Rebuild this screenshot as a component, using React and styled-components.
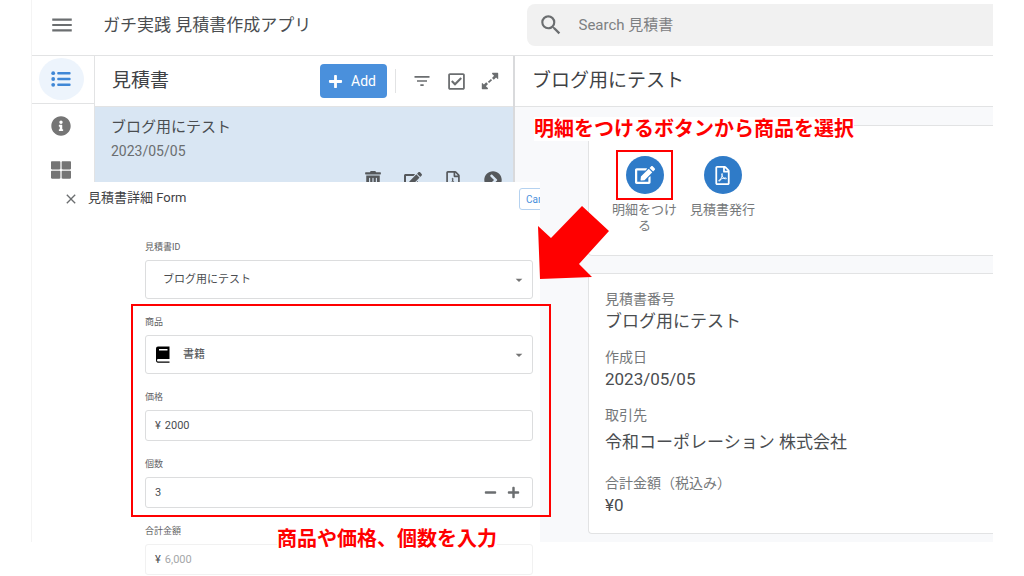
import { useState } from 'react';
import styled, { createGlobalStyle, css } from 'styled-components';
import {
  FaPlus,
  FaMinus,
  FaInfoCircle,
  FaThLarge,
  FaRegCheckSquare,
  FaTrashAlt,
  FaEdit,
  FaRegFilePdf,
  FaChevronCircleRight,
} from 'react-icons/fa';
import { MdMenu, MdSearch, MdFilterList, MdClose, MdArrowDropDown } from 'react-icons/md';

const GlobalStyle = createGlobalStyle`
  *, *::after {
    box-sizing: border-box;
  }
  body {
    margin: 0;
    background-color: #fff;
    color: #4a4d50;
    font-family: Roboto, "Noto Sans CJK JP", sans-serif;
  }
  button, input, select {
    font-family: inherit;
    color: inherit;
  }
  h1, h2, h3, p, dl, dd {
    margin: 0;
    font-weight: 400;
  }
`;

const Stage = styled.div`
  position: relative;
  min-height: 100vh;
  margin: 0 31px;
`;

const AppWindow = styled.div`
  border-left: 1px solid #f4f4f4;
`;

const TopBar = styled.header`
  display: flex;
  align-items: center;
  height: 56px;
  padding-bottom: 6px;
  border-bottom: 1px solid #e2e3e4;
`;

const IconButton = styled.button`
  display: inline-flex;
  align-items: center;
  justify-content: center;
  flex: none;
  padding: 0;
  border: none;
  background: none;
  color: ${({ $color }) => $color || '#6b6e70'};
  cursor: pointer;
`;

const MenuCell = styled.div`
  display: flex;
  justify-content: center;
  width: 60px;
`;

const AppTitle = styled.h1`
  flex: 1;
  padding-left: 11px;
  font-size: 17px;
  line-height: 22px;
`;

const SearchBox = styled.label`
  display: flex;
  align-items: center;
  gap: 15px;
  width: calc(50% - 14px);
  height: 42px;
  padding-left: 11px;
  border-radius: 8px 0 0 8px;
  background-color: #f1f1f1;
  color: #6b6e70;

  input {
    flex: 1;
    min-width: 0;
    padding: 0;
    border: none;
    outline: none;
    background: none;
    font-size: 15px;
  }
  input::placeholder {
    color: #7d8082;
    opacity: 1;
  }
`;

const Body = styled.div`
  display: grid;
  grid-template-columns: 63px minmax(0, 420fr) minmax(0, 478fr);
`;

const Sidebar = styled.nav`
  border-right: 1px solid #e2e3e4;
`;

const SidebarTop = styled.div`
  display: flex;
  align-items: center;
  justify-content: center;
  height: 48px;
  padding: 0 4px 2px 0;
  border-bottom: 1px solid #e2e3e4;
`;

const SidebarLinks = styled.div`
  display: flex;
  flex-direction: column;
  align-items: center;
  gap: 24px;
  padding: 12px 4px 0 0;
`;

const ActiveView = styled(IconButton)`
  width: 45px;
  height: 42px;
  border-radius: 50%;
  background-color: #edf4fc;
`;

const ListPane = styled.section`
  display: flex;
  flex-direction: column;
  border-right: 2px solid #d9dadc;
`;

const PaneHeader = styled.div`
  display: flex;
  align-items: center;
  height: 51px;
  padding: 0 14px 0 17px;
  border-bottom: 1px solid #e2e3e4;
`;

const PaneTitle = styled.h2`
  flex: 1;
  color: #3f4245;
  font-size: 19px;
  line-height: 24px;
`;

const AddButton = styled.button`
  display: flex;
  align-items: center;
  gap: 8px;
  height: 34px;
  padding: 0 11px 0 8px;
  border: none;
  border-radius: 4px;
  background-color: #4a90dc;
  color: #fff;
  font-size: 14px;
  cursor: pointer;
`;

const Divider = styled.span`
  width: 1px;
  height: 24px;
  margin: 0 16px 0 8px;
  background-color: #e2e3e4;
`;

const Tools = styled.div`
  display: flex;
  align-items: center;
  gap: 15px;
`;

const ListItem = styled.article`
  flex: 1;
  padding: 8px 11px 0 16px;
  background-color: #d9e6f3;
`;

const ItemTitle = styled.h3`
  font-size: 15px;
  line-height: 24px;
`;

const ItemDate = styled.p`
  color: #6b6e70;
  font-size: 14px;
  line-height: 24px;
`;

const ItemActions = styled.div`
  display: flex;
  justify-content: flex-end;
  gap: 22px;
  padding-top: 8px;
`;

const DetailPane = styled.section`
  position: relative;
  background-color: #f8f9fb;
`;

const DetailHeader = styled(PaneHeader)`
  background-color: #fff;
`;

const DetailBody = styled.div`
  display: flex;
  flex-direction: column;
  gap: 17px;
  padding: 18px 0 8px 73px;
`;

const Card = styled.div`
  border: 1px solid #e2e3e4;
  border-right: none;
  border-radius: 4px 0 0 4px;
  background-color: #fff;
`;

const ActionCard = styled(Card)`
  display: flex;
  gap: 13px;
  padding: 30px 23px 21px;
`;

const Action = styled.button`
  position: relative;
  display: flex;
  flex-direction: column;
  align-items: center;
  gap: 8px;
  width: 65px;
  padding: 0;
  border: none;
  background: none;
  color: #75787a;
  font-size: 13px;
  line-height: 16px;
  cursor: pointer;

  ${({ $marked }) =>
    $marked &&
    css`
      &::after {
        content: '';
        position: absolute;
        top: -6px;
        left: 4px;
        width: 57px;
        height: 50px;
        border: 2px solid #f00;
      }
    `}
`;

const Circle = styled.span`
  display: flex;
  align-items: center;
  justify-content: center;
  width: 38px;
  height: 38px;
  border-radius: 50%;
  background-color: #2f7bc8;
  color: #fff;
`;

const InfoCard = styled(Card)`
  padding: 15px 16px 16px;
`;

const InfoList = styled.dl`
  display: flex;
  flex-direction: column;
  gap: 14px;

  dt {
    color: #75787a;
    font-size: 14px;
    line-height: 20px;
  }
`;

const InfoValue = styled.dd`
  font-size: 17px;
  line-height: ${({ $tall }) => ($tall ? '34px' : '24px')};
`;

const FormPanel = styled.form`
  position: absolute;
  top: 182px;
  left: 1px;
  width: calc(50% + 27px);
  background-color: #fff;
`;

const FormHeader = styled.div`
  display: flex;
  align-items: center;
  height: 34px;
  padding-left: 31px;
  overflow: hidden;
`;

const FormTitle = styled.h2`
  flex: 1;
  padding: 0 0 2px 9px;
  color: #3f4245;
  font-size: 13px;
  line-height: 16px;
  white-space: nowrap;
`;

// The header is narrower than the button, so only its left end shows
const CancelClip = styled.div`
  width: 21px;
`;

const CancelButton = styled.button`
  width: 54px;
  height: 22px;
  padding: 0 6px;
  border: 1px solid #b5d2f0;
  border-radius: 3px;
  background-color: #fff;
  color: #4a90dc;
  font-size: 10px;
  text-align: left;
`;

const Fields = styled.div`
  display: flex;
  flex-direction: column;
  gap: 17px;
  padding: 25px 7px 0 113px;
`;

const MarkedFields = styled.div`
  position: relative;
  display: flex;
  flex-direction: column;
  gap: 17px;

  &::after {
    content: '';
    position: absolute;
    inset: -12px -18px -9px -14px;
    border: 2px solid #f00;
    pointer-events: none;
  }
`;

const Field = styled.div`
  display: flex;
  flex-direction: column;
  gap: 7px;
`;

const FieldLabel = styled.label`
  color: #5f6264;
  font-size: 9px;
  line-height: 12px;
`;

const Control = styled.div`
  display: flex;
  align-items: center;
  gap: 4px;
  height: ${({ $tall }) => ($tall ? '39px' : '31px')};
  padding: 0 5px 0 9px;
  border: 1px solid ${({ $muted }) => ($muted ? '#f1f1f1' : '#dcddde')};
  border-radius: 3px;
  font-size: 11px;

  input,
  select {
    flex: 1;
    min-width: 0;
    padding: 0;
    border: none;
    outline: none;
    background: none;
    font-size: 11px;
    appearance: none;
  }
  select {
    height: 100%;
    padding-left: 8px;
  }
  input:disabled {
    color: #a5a7a9;
  }
  > svg {
    flex: none;
    color: #757575;
  }
`;

const Stepper = styled.div`
  display: flex;
  gap: 10px;
  padding-right: 7px;
`;

const Note = styled.p`
  position: absolute;
  top: ${({ $top }) => $top};
  left: ${({ $left }) => $left};
  background-color: #fff;
  color: #f00;
  font-size: 20px;
  font-weight: 700;
  line-height: 24px;
  white-space: nowrap;
`;

const Arrow = styled.svg`
  position: absolute;
  top: 206px;
  left: calc(50% + 25px);
`;

const ListIcon = () => (
  <svg width="20" height="16" viewBox="0 0 20 16" fill="currentColor">
    <circle cx="2.2" cy="2.2" r="1.9" />
    <circle cx="2.2" cy="8" r="1.9" />
    <circle cx="2.2" cy="13.8" r="1.9" />
    <rect x="6.2" y="0.9" width="13.4" height="2.6" rx="1" />
    <rect x="6.2" y="6.7" width="13.4" height="2.6" rx="1" />
    <rect x="6.2" y="12.5" width="13.4" height="2.6" rx="1" />
  </svg>
);

const ExpandIcon = () => (
  <svg width="18" height="18" viewBox="0 0 18 18" fill="currentColor">
    <path d="M11 1.4q0-.6.6-.6h5q.6 0 .6.6v5q0 .8-.8.4l-1.3-1.2-2.3 2.2-1.8-1.8 2.1-2.2-1.7-1.6z" />
    <path d="M7 16.6q0 .6-.6.6h-5q-.6 0-.6-.6v-5q0-.8.8-.4l1.3 1.2 2.3-2.2 1.8 1.8-2.1 2.2 1.7 1.6z" />
    <path d="M8.1 11 6.9 9.8 9.9 7l1.2 1.2z" />
  </svg>
);

const BookIcon = () => (
  <svg width="16" height="18" viewBox="0 0 16 18">
    <path d="M3 .5h11.5V13H3q-1 0-1 1.2T3 15.600h11.500v1.200H3Q1 16.800 1 14V2.500Q1 .5 3 .5z" fill="#000" />
    <rect x="4" y="3" width="8.500" height="1.500" fill="#fff" />
  </svg>
);

const info = [
  { label: '見積書番号', value: 'ブログ用にテスト' },
  { label: '作成日', value: '2023/05/05' },
  { label: '取引先', value: '令和コーポレーション 株式会社', tall: true },
  { label: '合計金額（税込み）', value: '¥0' },
];

const App = () => {
  const [price, setPrice] = useState('2000');
  const [count, setCount] = useState(3);

  const total = (Number(price) * count || 0).toLocaleString('en-US');

  return (
    <>
      <GlobalStyle />
      <Stage>
        <AppWindow>
          <TopBar>
            <MenuCell>
              <IconButton aria-label="メニュー">
                <MdMenu size={26} />
              </IconButton>
            </MenuCell>
            <AppTitle>ガチ実践 見積書作成アプリ</AppTitle>
            <SearchBox>
              <MdSearch size={26} />
              <input type="search" placeholder="Search 見積書" />
            </SearchBox>
          </TopBar>

          <Body>
            <Sidebar>
              <SidebarTop>
                <ActiveView $color="#3f87d6" aria-label="見積書">
                  <ListIcon />
                </ActiveView>
              </SidebarTop>
              <SidebarLinks>
                <IconButton $color="#757575" aria-label="情報">
                  <FaInfoCircle size={20} />
                </IconButton>
                <IconButton $color="#757575" aria-label="一覧">
                  <FaThLarge size={20} />
                </IconButton>
              </SidebarLinks>
            </Sidebar>

            <ListPane>
              <PaneHeader>
                <PaneTitle>見積書</PaneTitle>
                <AddButton>
                  <FaPlus size={15} />
                  Add
                </AddButton>
                <Divider />
                <Tools>
                  <IconButton aria-label="絞り込み">
                    <MdFilterList size={20} />
                  </IconButton>
                  <IconButton aria-label="選択">
                    <FaRegCheckSquare size={19} />
                  </IconButton>
                  <IconButton aria-label="拡大">
                    <ExpandIcon />
                  </IconButton>
                </Tools>
              </PaneHeader>
              <ListItem>
                <ItemTitle>ブログ用にテスト</ItemTitle>
                <ItemDate>2023/05/05</ItemDate>
                <ItemActions>
                  <IconButton $color="#55585b" aria-label="削除">
                    <FaTrashAlt size={18} />
                  </IconButton>
                  <IconButton $color="#55585b" aria-label="編集">
                    <FaEdit size={18} />
                  </IconButton>
                  <IconButton $color="#55585b" aria-label="PDF">
                    <FaRegFilePdf size={18} />
                  </IconButton>
                  <IconButton $color="#55585b" aria-label="開く">
                    <FaChevronCircleRight size={18} />
                  </IconButton>
                </ItemActions>
              </ListItem>
            </ListPane>

            <DetailPane>
              <DetailHeader>
                <PaneTitle>ブログ用にテスト</PaneTitle>
              </DetailHeader>
              <DetailBody>
                <ActionCard>
                  <Action $marked>
                    <Circle>
                      <FaEdit size={20} />
                    </Circle>
                    明細をつける
                  </Action>
                  <Action>
                    <Circle>
                      <FaRegFilePdf size={19} />
                    </Circle>
                    見積書発行
                  </Action>
                </ActionCard>
                <InfoCard>
                  <InfoList>
                    {info.map(({ label, value, tall }) => (
                      <div key={label}>
                        <dt>{label}</dt>
                        <InfoValue $tall={tall}>{value}</InfoValue>
                      </div>
                    ))}
                  </InfoList>
                </InfoCard>
              </DetailBody>
              <Note $top="61px" $left="19px">明細をつけるボタンから商品を選択</Note>
            </DetailPane>
          </Body>
        </AppWindow>

        <FormPanel onSubmit={(e) => e.preventDefault()}>
          <FormHeader>
            <IconButton type="button" aria-label="閉じる">
              <MdClose size={16} />
            </IconButton>
            <FormTitle>見積書詳細 Form</FormTitle>
            <CancelClip>
              <CancelButton type="button">Cancel</CancelButton>
            </CancelClip>
          </FormHeader>

          <Fields>
            <Field>
              <FieldLabel htmlFor="quote">見積書ID</FieldLabel>
              <Control $tall>
                <select id="quote">
                  <option>ブログ用にテスト</option>
                </select>
                <MdArrowDropDown size={16} />
              </Control>
            </Field>

            <MarkedFields>
              <Field>
                <FieldLabel htmlFor="product">商品</FieldLabel>
                <Control $tall>
                  <BookIcon />
                  <select id="product">
                    <option>書籍</option>
                  </select>
                  <MdArrowDropDown size={16} />
                </Control>
              </Field>
              <Field>
                <FieldLabel htmlFor="price">価格</FieldLabel>
                <Control>
                  <span>¥</span>
                  <input id="price" value={price} onChange={(e) => setPrice(e.target.value)} />
                </Control>
              </Field>
              <Field>
                <FieldLabel htmlFor="count">個数</FieldLabel>
                <Control>
                  <input
                    id="count"
                    value={count}
                    onChange={(e) => setCount(Number(e.target.value) || 0)}
                  />
                  <Stepper>
                    <IconButton type="button" aria-label="減らす" onClick={() => setCount(count - 1)}>
                      <FaMinus size={13} />
                    </IconButton>
                    <IconButton type="button" aria-label="増やす" onClick={() => setCount(count + 1)}>
                      <FaPlus size={13} />
                    </IconButton>
                  </Stepper>
                </Control>
              </Field>
            </MarkedFields>

            <Field>
              <FieldLabel htmlFor="total">合計金額</FieldLabel>
              <Control $muted>
                <span>¥</span>
                <input id="total" value={total} disabled />
              </Control>
            </Field>
          </Fields>
          <Note $top="345px" $left="245px">商品や価格、個数を入力</Note>
        </FormPanel>

        <Arrow width="73" height="74" viewBox="0 0 73 74" fill="#f00">
          <path d="M45 0 72 25 42 58 55 71 3 73 1 20 14 32z" />
        </Arrow>
      </Stage>
    </>
  );
};

export default App;
